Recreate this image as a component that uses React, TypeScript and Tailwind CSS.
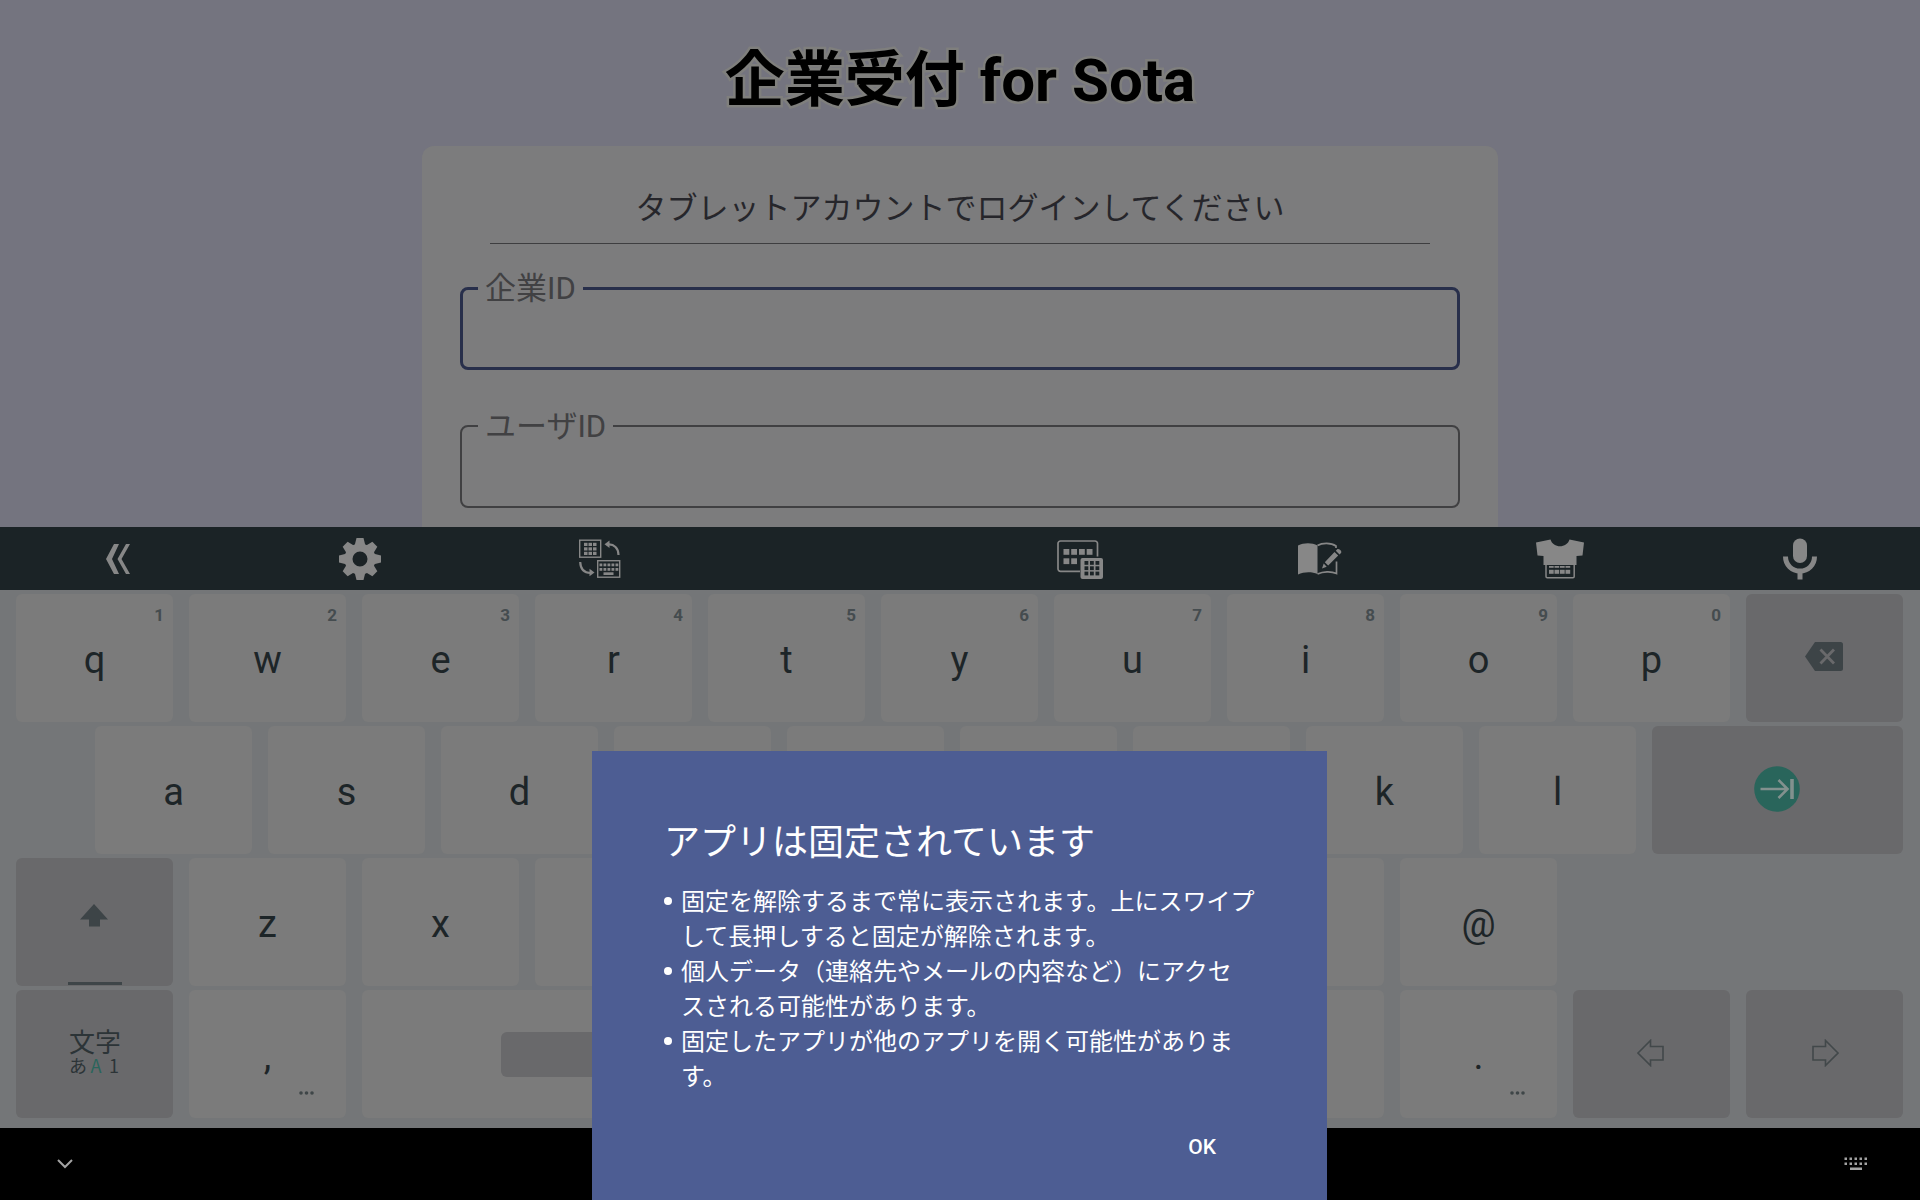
import type { ReactNode } from "react";

const icon = "fill-[#878787]";

function CollapseIcon() {
  return (
    <svg width="26" height="30" viewBox="0 0 26 30" className={`mr-1 ${icon}`}>
      <path d="M9 0h5L7 15l7 15H9L1 15z" />
      <path d="M21 0h4l-8.500 15L25 30h-4l-8.500-15z" />
    </svg>
  );
}

function GearIcon() {
  return (
    <svg width="42" height="42" viewBox="-21 -21 42 42" className={icon}>
      <path
        fillRule="evenodd"
        d="M0-15.500A15.500 15.500 0 1 1 0 15.500A15.500 15.500 0 1 1 0-15.500zM0-7.500A7.500 7.500 0 1 0 0 7.500A7.500 7.500 0 1 0 0-7.500z"
      />
      {[0, 45, 90, 135, 180, 225, 270, 315].map((a) => (
        <path key={a} d="M-5.500-13L-3.500-21H3.500L5.500-13z" transform={`rotate(${a})`} />
      ))}
    </svg>
  );
}

function SwitchLayoutIcon() {
  return (
    <svg width="42" height="40" viewBox="0 0 42 40" className={icon}>
      <rect x="0.700" y="1.200" width="21" height="17" fill="none" stroke="#878787" strokeWidth="1.400" />
      {[4, 8.500, 13].map((y) =>
        [5, 9.500, 14].map((x) => <rect key={`${x}-${y}`} x={x} y={y - 0.200} width="3.500" height="3.200" />),
      )}
      <path d="M29 5.500C35 5 39.500 9 39.500 16" fill="none" stroke="#878787" strokeWidth="2.200" />
      <path d="M25.500 5.200l5-3.700v7.600z" />
      <path d="M1.200 23C1.500 30 5 34 11.500 34" fill="none" stroke="#878787" strokeWidth="2.200" />
      <path d="M15.500 33.500l-5-3.800v7.600z" />
      <rect x="18.700" y="21.700" width="22" height="16.500" fill="none" stroke="#878787" strokeWidth="1.400" />
      {[24.500, 29].map((y) =>
        [20.500, 24.500, 28.500, 32.500, 36.500].map((x) => (
          <rect key={`${x}-${y}`} x={x} y={y} width="2.800" height="2.800" />
        )),
      )}
      <rect x="24.500" y="33.300" width="10" height="2.700" />
    </svg>
  );
}

function KeyboardTypeIcon() {
  return (
    <svg width="46" height="40" viewBox="0 0 46 40" className={icon}>
      <path
        d="M23 32.300H3.500a2.500 2.500 0 0 1-2.500-2.500V4.500A2.500 2.500 0 0 1 3.500 2H38a2.500 2.500 0 0 1 2.500 2.500V17.500"
        fill="none"
        stroke="#878787"
        strokeWidth="1.700"
      />
      {[6.500, 14.200, 22, 29.700].map((x) => (
        <rect key={x} x={x} y="10" width="5.800" height="5.800" />
      ))}
      {[6.500, 14.200].map((x) => (
        <rect key={x} x={x} y="19.300" width="5.800" height="5.800" />
      ))}
      <rect x="23.500" y="19" width="22.500" height="21" rx="2" />
      {[22, 27.300, 32.600].map((y) =>
        [27.500, 33, 38.500].map((x) => (
          <rect key={`${x}-${y}`} x={x} y={y} width="3.800" height="3.800" className="fill-[#1b2326]" />
        )),
      )}
    </svg>
  );
}

function DictionaryIcon() {
  return (
    <svg width="44" height="34" viewBox="0 0 44 34" className={icon}>
      <path d="M0 3.500C6 0.500 14 0.500 19.500 3.500V32C14 29.500 6 29.500 0 32.500z" />
      <path
        d="M19.500 3.500C24 0.800 33 0.500 38 4V6M38.500 19.500V31.500C33 29 25 29.500 19.500 32"
        fill="none"
        stroke="#878787"
        strokeWidth="1.700"
      />
      <path d="M24 26.500l1.700-5 3 3.300zM26.800 20.200L36.500 10l3.700 3.500-10 10zM37.800 8.700l1.200-1.300c1.500-1.500 5.500 1.500 4 3.500l-1.500 1.600z" />
    </svg>
  );
}

function ThemeIcon() {
  return (
    <svg width="48" height="40" viewBox="0 0 48 40" className={icon}>
      <path d="M14.500 0.500C17 9.500 31 9.500 33.500 0.500L48 3.500 46.500 16.500 40.500 17V26H7.500V17L1.500 16.500 0 3.500z" />
      <path d="M10 26v11.500a1.200 1.200 0 0 0 1.200 1.200H37a1.200 1.200 0 0 0 1.200-1.200V26" fill="none" stroke="#878787" strokeWidth="1.500" />
      {[13, 18.500, 24, 29.500].map((x) => (
        <g key={x}>
          <rect x={x} y="27" width="4.700" height="1.800" />
          <rect x={x} y="30.800" width="4.700" height="4" />
        </g>
      ))}
    </svg>
  );
}

function MicIcon() {
  return (
    <svg width="36" height="42" viewBox="0 0 36 42" className={icon}>
      <rect x="11" y="0.500" width="14" height="24.500" rx="7" />
      <path d="M3.500 18.500C3.500 27 10 33 18 33S32.500 27 32.500 18.500" fill="none" stroke="#878787" strokeWidth="5" />
      <rect x="15.500" y="34" width="5" height="7.500" />
    </svg>
  );
}

const tools: { name: string; icon: ReactNode }[] = [
  { name: "閉じる", icon: <CollapseIcon /> },
  { name: "設定", icon: <GearIcon /> },
  { name: "配列切替", icon: <SwitchLayoutIcon /> },
  { name: "", icon: null },
  { name: "キーボード種類", icon: <KeyboardTypeIcon /> },
  { name: "単語登録", icon: <DictionaryIcon /> },
  { name: "きせかえ", icon: <ThemeIcon /> },
  { name: "音声入力", icon: <MicIcon /> },
];

function Key({
  children,
  hint,
  more,
  special,
  label,
  span = "",
}: {
  children?: ReactNode;
  hint?: string;
  more?: boolean;
  special?: boolean;
  label?: string;
  span?: string;
}) {
  return (
    <button
      type="button"
      aria-label={label}
      className={`relative flex h-32 items-center justify-center rounded-md text-[38px] leading-[44px] text-[#1d2528] ${
        special ? "bg-[#69696b]" : "bg-[#7b7b7b] pt-1"
      } ${span}`}
    >
      {children}
      {hint && (
        <span className="absolute top-[11px] right-[9px] text-[17px] leading-5 font-bold text-[#454c4f]">{hint}</span>
      )}
      {more && (
        <svg width="15" height="4" viewBox="0 0 15 4" className="absolute right-8 bottom-[23px] fill-[#3f4648]">
          <circle cx="2" cy="2" r="1.800" />
          <circle cx="7.500" cy="2" r="1.800" />
          <circle cx="13" cy="2" r="1.800" />
        </svg>
      )}
    </button>
  );
}

// Keys that the dialog covers carry only an accessible name.
const covered = "fghjcvbnm";

function LetterKey({ char }: { char: string }) {
  return <Key label={char}>{covered.includes(char) ? null : char}</Key>;
}

function Field({ id, label, focused }: { id: string; label: string; focused?: boolean }) {
  return (
    <fieldset
      className={`h-[98px] rounded-lg ${focused ? "border-[3px] border-[#282f4b] pl-[15px]" : "border-2 border-[#404042] pl-4"}`}
    >
      <legend className="px-[7px] pt-[2px] text-[31px] leading-[30px] text-[#414143]">
        <label htmlFor={id}>{label}</label>
      </legend>
      <input id={id} type="text" className="h-14 w-full bg-transparent pr-6 text-3xl text-[#26262b] outline-none" />
    </fieldset>
  );
}

const notes: [string, string][] = [
  ["固定を解除するまで常に表示されます。上にスワイプ", "して長押しすると固定が解除されます。"],
  ["個人データ（連絡先やメールの内容など）にアクセ", "スされる可能性があります。"],
  ["固定したアプリが他のアプリを開く可能性がありま", "す。"],
];

export default function App() {
  return (
    <div
      lang="ja"
      className="flex min-h-screen flex-col bg-[#74747f] font-['Roboto','Noto_Sans_CJK_JP',sans-serif]"
    >
      <main className="flex flex-1 flex-col items-center">
        <h1 className="flex h-[146px] items-center pt-4 text-6xl leading-[72px] font-bold text-black [-webkit-text-stroke:5px_#7f7f7d] [paint-order:stroke_fill]">
          企業受付 for Sota
        </h1>
        <form className="flex w-[1076px] max-w-full flex-1 flex-col rounded-t-xl bg-[#7c7c7d] px-[38px] pt-9 pb-4">
          <p className="mx-[30px] border-b border-[#3e3e40] pt-1 pb-3 text-center text-[31px] leading-[45px] text-[#26262b]">
            タブレットアカウントでログインしてください
          </p>
          <div className="mt-7 flex flex-col gap-10">
            <Field id="company" label="企業ID" focused />
            <Field id="user" label="ユーザID" />
          </div>
        </form>
      </main>

      <section aria-label="キーボード" className="bg-[#747678]">
        <div className="grid h-[63px] grid-cols-8 bg-[#1b2326]">
          {tools.map((t, i) =>
            t.icon ? (
              <button key={i} type="button" aria-label={t.name} className="flex items-center justify-center">
                {t.icon}
              </button>
            ) : (
              <span key={i} />
            ),
          )}
        </div>
        <div className="flex flex-col gap-1 pt-1 pr-[17px] pb-[10px] pl-4">
          <div className="grid grid-cols-11 gap-4">
            {"qwertyuiop".split("").map((c, i) => (
              <Key key={c} hint={String((i + 1) % 10)}>
                {c}
              </Key>
            ))}
            <Key special label="削除">
              <svg width="38" height="29" viewBox="0 0 38 29" className="mr-[2px] mb-1">
                <path d="M10 0H35.500A2.500 2.500 0 0 1 38 2.500V26.500A2.500 2.500 0 0 1 35.500 29H10L0 14.500z" fill="#3d4447" />
                <path d="M15.500 7.500l13.500 14M29 7.500l-13.500 14" stroke="#69696b" strokeWidth="2.800" />
              </svg>
            </Key>
          </div>
          <div className="grid grid-cols-[repeat(9,157fr)_251fr] gap-4 pl-[79px]">
            {"asdfghjkl".split("").map((c) => (
              <LetterKey key={c} char={c} />
            ))}
            <Key special label="次へ">
              <svg width="46" height="46" viewBox="0 0 46 46" className="mr-[2px] mb-[2px]">
                <circle cx="23" cy="23" r="22.800" fill="#29655b" />
                <path d="M6.500 23H33M24.500 14l9 9-9 9" fill="none" stroke="#82918e" strokeWidth="2.600" />
                <path d="M38 13v20" stroke="#82918e" strokeWidth="3.600" />
              </svg>
            </Key>
          </div>
          <div className="grid grid-cols-11 gap-4">
            <Key special label="シフト">
              <svg width="28" height="23" viewBox="0 0 28 23" className="mr-[2px] mb-[14px] fill-[#3d4447]">
                <path d="M14 0L28 15.500H20V22.500H9V15.500H0z" />
              </svg>
              <span className="absolute bottom-px left-1/2 h-[3px] w-[54px] -translate-x-1/2 bg-[#3e4548]" />
            </Key>
            {"zxcvbnm@".split("").map((c) => (
              <LetterKey key={c} char={c} />
            ))}
          </div>
          <div className="grid grid-cols-11 gap-4">
            <Key special label="文字切替">
              <span className="flex flex-col items-center pb-[6px] font-['Noto_Sans_CJK_JP',sans-serif] text-[#2c3437]">
                <span className="pl-px text-[26px] leading-7">文字</span>
                <span className="grid grid-cols-3 pl-[3px] text-center text-[18px] leading-5">
                  <span>あ</span>
                  <span className="text-[#29655b]">A</span>
                  <span>1</span>
                </span>
              </span>
            </Key>
            <Key more>,</Key>
            <Key label="空白" span="col-span-6">
              <span className="mb-1 h-[45px] w-[744px] rounded-md bg-[#69696b]" />
            </Key>
            <Key more>.</Key>
            <Key special label="左へ">
              <svg width="28" height="28" viewBox="0 0 28 28" className="mr-[2px] mb-[2px]" fill="none" stroke="#42484a" strokeWidth="1.600">
                <path d="M1 14L13.500 1.500V7.500H26V21H13.500V26.500z" />
              </svg>
            </Key>
            <Key special label="右へ">
              <svg width="28" height="28" viewBox="0 0 28 28" className="mb-[2px]" fill="none" stroke="#42484a" strokeWidth="1.600">
                <path d="M27 14L14.500 1.500V7.500H2V21H14.500V26.500z" />
              </svg>
            </Key>
          </div>
        </div>
      </section>

      <nav className="flex h-[72px] items-center justify-between bg-black pr-[52px] pl-[57px]">
        <button type="button" aria-label="キーボードを隠す">
          <svg width="16" height="10" viewBox="0 0 16 10" fill="none" stroke="#a3a3a3" strokeWidth="2">
            <path d="M1 1l7 7 7-7" />
          </svg>
        </button>
        <button type="button" aria-label="入力方法">
          <svg width="24" height="16" viewBox="0 0 24 16" fill="#a3a3a3">
            {[0.500, 5.500, 10.500, 15.500, 20.500].map((x) => (
              <g key={x}>
                <rect x={x} y="1.500" width="2.500" height="2.500" />
                <rect x={x} y="6.500" width="2.500" height="2.500" />
              </g>
            ))}
            <rect x="6" y="11.500" width="12" height="2.500" />
          </svg>
        </button>
      </nav>

      <div className="fixed inset-x-0 bottom-0 flex justify-center pr-px">
        <div
          role="dialog"
          aria-labelledby="pin-title"
          className="w-[735px] max-w-full bg-[#4d5d93] px-[72px] pt-[66px] pb-[35px] text-white"
        >
          <h2 id="pin-title" className="text-4xl leading-[53px]">
            アプリは固定されています
          </h2>
          <ul className="mt-[15px] text-2xl leading-[35px] whitespace-nowrap">
            {notes.map(([a, b]) => (
              <li key={a} className="flex gap-[9px]">
                <span className="mt-3 size-2 shrink-0 rounded-full bg-white" />
                <span>
                  {a}
                  <br />
                  {b}
                </span>
              </li>
            ))}
          </ul>
          <div className="mt-[34px] flex justify-end pr-[39px]">
            <button type="button" className="text-[21px] leading-9 font-medium">
              OK
            </button>
          </div>
        </div>
      </div>
    </div>
  );
}
